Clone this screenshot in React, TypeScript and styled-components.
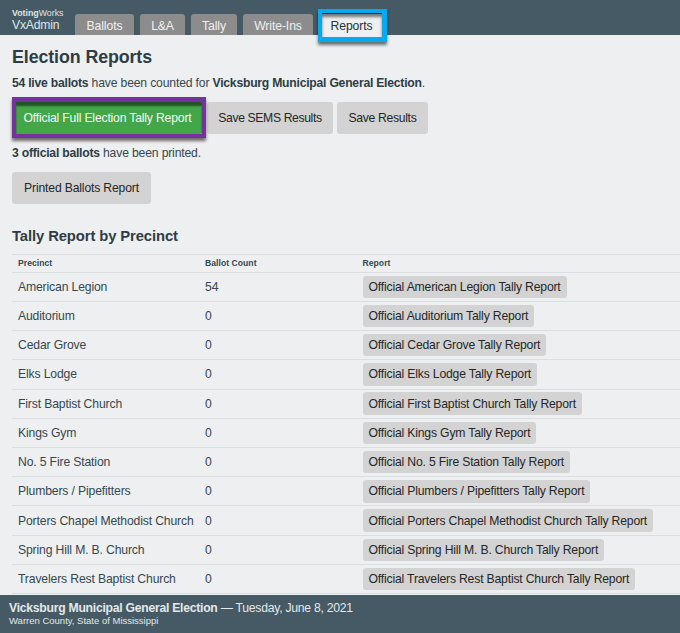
import React from "react";
import styled, { createGlobalStyle } from "styled-components";

const GlobalStyle = createGlobalStyle`
  * { box-sizing: border-box; }
  html, body { margin: 0; padding: 0; }
  body {
    font-family: "Liberation Sans", Arial, sans-serif;
    font-size: 12.2px;
    color: #37474f;
    background: #edeff0;
    overflow: hidden;
  }
`;

const Screen = styled.div`
  display: flex;
  flex-direction: column;
  width: 680px;
  height: 633px;
  background: #edeff0;
  white-space: nowrap;
`;

const NavBar = styled.header`
  display: flex;
  align-items: flex-end;
  flex: none;
  height: 35px;
  padding-left: 12px;
  background: #455a64;
`;

const Brand = styled.div`
  width: 63px;
  height: 27px;
  color: #dfe5e8;
`;

const BrandName = styled.div`
  font-size: 8.8px;
  line-height: 11px;
`;

const AppName = styled.div`
  font-size: 12.2px;
  line-height: 13px;
  letter-spacing: -0.2px;
`;

const Tabs = styled.nav`
  display: flex;
  gap: 6px;
`;

const Tab = styled.button<{ $width: number; $active?: boolean }>`
  position: relative;
  width: ${(p) => p.$width}px;
  height: 21px;
  padding: 3px 0 0;
  border: 0;
  border-radius: 3px 3px 0 0;
  background: ${(p) => (p.$active ? "#edeff0" : "#8c8c8c")};
  color: ${(p) => (p.$active ? "#263238" : "#f0f0f0")};
  font: 12.2px/18px "Liberation Sans", Arial, sans-serif;
  letter-spacing: -0.1px;
`;

const TabHighlight = styled.span`
  position: absolute;
  top: -5px;
  left: -1px;
  width: 69px;
  height: 33px;
  border: 5px solid #05a9ec;
  border-width: 4px 5px 5px 4px;
  box-shadow: 0 3px 3px rgba(0, 0, 0, 0.55), inset 0 4px 3px rgba(0, 0, 0, 0.5);
`;

const Main = styled.main`
  flex: 1;
  min-height: 0;
  padding-left: 12px;
`;

const Title = styled.h1`
  margin: 12px 0 0;
  font-size: 17.8px;
  line-height: 21px;
  letter-spacing: -0.08px;
  color: #2d3d45;
`;

const Paragraph = styled.p<{ $top: number }>`
  margin: ${(p) => p.$top}px 0 0;
  line-height: 16px;
  letter-spacing: -0.17px;

  b {
    color: #2d3d45;
    letter-spacing: -0.24px;
  }
`;

const ButtonRow = styled.div<{ $top: number }>`
  display: flex;
  gap: 4px;
  margin-top: ${(p) => p.$top}px;
`;

const ActionButton = styled.button<{ $width: number; $tracking: number; $primary?: boolean }>`
  position: relative;
  width: ${(p) => p.$width}px;
  height: 32px;
  padding: 0;
  border: 0;
  border-radius: 3px;
  background: ${(p) => (p.$primary ? "#43a648" : "#d3d3d3")};
  color: ${(p) => (p.$primary ? "#f4faf4" : "#262626")};
  font: 12.2px/32px "Liberation Sans", Arial, sans-serif;
  letter-spacing: ${(p) => p.$tracking}px;
`;

const ButtonHighlight = styled.span`
  position: absolute;
  z-index: 1;
  top: -5px;
  left: 0;
  width: 194px;
  height: 41px;
  border: 4px solid #75329c;
  border-width: 5px 4px 4px;
  box-shadow: 0 3px 3px rgba(0, 0, 0, 0.55), inset 0 4px 2px rgba(0, 0, 0, 0.5);
`;

const SectionTitle = styled.h2`
  margin: 23px 0 0;
  font-size: 14.8px;
  line-height: 18px;
  letter-spacing: -0.1px;
  color: #2d3d45;
`;

const Table = styled.div`
  margin-top: 9px;
  border-top: 1px solid #dadfe1;
`;

const Row = styled.div<{ $head?: boolean }>`
  display: grid;
  grid-template-columns: 187px 157.5px 1fr;
  align-items: center;
  height: ${(p) => (p.$head ? "17.7px" : "29.22px")};
  padding-left: 6px;
  border-bottom: 1px solid #dadfe1;
  font-size: ${(p) => (p.$head ? "8.6px" : "12.2px")};
  font-weight: ${(p) => (p.$head ? 700 : 400)};
  letter-spacing: ${(p) => (p.$head ? "0.04px" : "-0.15px")};
`;

const ReportCell = styled.div`
  display: flex;
`;

const ReportButton = styled.button`
  height: 22.5px;
  padding: 0 6px;
  border: 0;
  border-radius: 3px;
  background: #d3d3d3;
  color: #262626;
  font: 12.2px/22px "Liberation Sans", Arial, sans-serif;
  letter-spacing: -0.18px;
`;

const Footer = styled.footer`
  flex: none;
  height: 38px;
  padding: 5px 9px 0;
  background: #455a64;
  color: #e3e8ea;
`;

const ElectionLine = styled.div`
  line-height: 16px;
  letter-spacing: -0.25px;

  b { letter-spacing: -0.26px; }
`;

const CountyLine = styled.div`
  font-size: 9.5px;
  line-height: 10px;
`;

const precincts = [
  { name: "American Legion", count: 54 },
  { name: "Auditorium", count: 0 },
  { name: "Cedar Grove", count: 0 },
  { name: "Elks Lodge", count: 0 },
  { name: "First Baptist Church", count: 0 },
  { name: "Kings Gym", count: 0 },
  { name: "No. 5 Fire Station", count: 0 },
  { name: "Plumbers / Pipefitters", count: 0 },
  { name: "Porters Chapel Methodist Church", count: 0 },
  { name: "Spring Hill M. B. Church", count: 0 },
  { name: "Travelers Rest Baptist Church", count: 0 },
];

export default function App() {
  return (
    <Screen>
      <GlobalStyle />
      <NavBar>
        <Brand>
          <BrandName><b>Voting</b>Works</BrandName>
          <AppName>VxAdmin</AppName>
        </Brand>
        <Tabs>
          <Tab $width={59}>Ballots</Tab>
          <Tab $width={45}>L&amp;A</Tab>
          <Tab $width={46}>Tally</Tab>
          <Tab $width={70}>Write-Ins</Tab>
          <Tab $width={65} $active>Reports<TabHighlight /></Tab>
        </Tabs>
      </NavBar>
      <Main>
        <Title>Election Reports</Title>
        <Paragraph $top={7}>
          <b>54 live ballots</b> have been counted for <b>Vicksburg Municipal General Election</b>.
        </Paragraph>
        <ButtonRow $top={11}>
          <ActionButton $width={191} $tracking={-0.18} $primary>
            Official Full Election Tally Report
            <ButtonHighlight />
          </ActionButton>
          <ActionButton $width={126} $tracking={-0.38}>Save SEMS Results</ActionButton>
          <ActionButton $width={91} $tracking={-0.33}>Save Results</ActionButton>
        </ButtonRow>
        <Paragraph $top={11}><b>3 official ballots</b> have been printed.</Paragraph>
        <ButtonRow $top={11}>
          <ActionButton $width={139} $tracking={-0.17}>Printed Ballots Report</ActionButton>
        </ButtonRow>
        <SectionTitle>Tally Report by Precinct</SectionTitle>
        <Table>
          <Row $head>
            <span>Precinct</span>
            <span>Ballot Count</span>
            <span>Report</span>
          </Row>
          {precincts.map((p) => (
            <Row key={p.name}>
              <span>{p.name}</span>
              <span>{p.count}</span>
              <ReportCell>
                <ReportButton>Official {p.name} Tally Report</ReportButton>
              </ReportCell>
            </Row>
          ))}
        </Table>
      </Main>
      <Footer>
        <ElectionLine><b>Vicksburg Municipal General Election</b> — Tuesday, June 8, 2021</ElectionLine>
        <CountyLine>Warren County, State of Mississippi</CountyLine>
      </Footer>
    </Screen>
  );
}
